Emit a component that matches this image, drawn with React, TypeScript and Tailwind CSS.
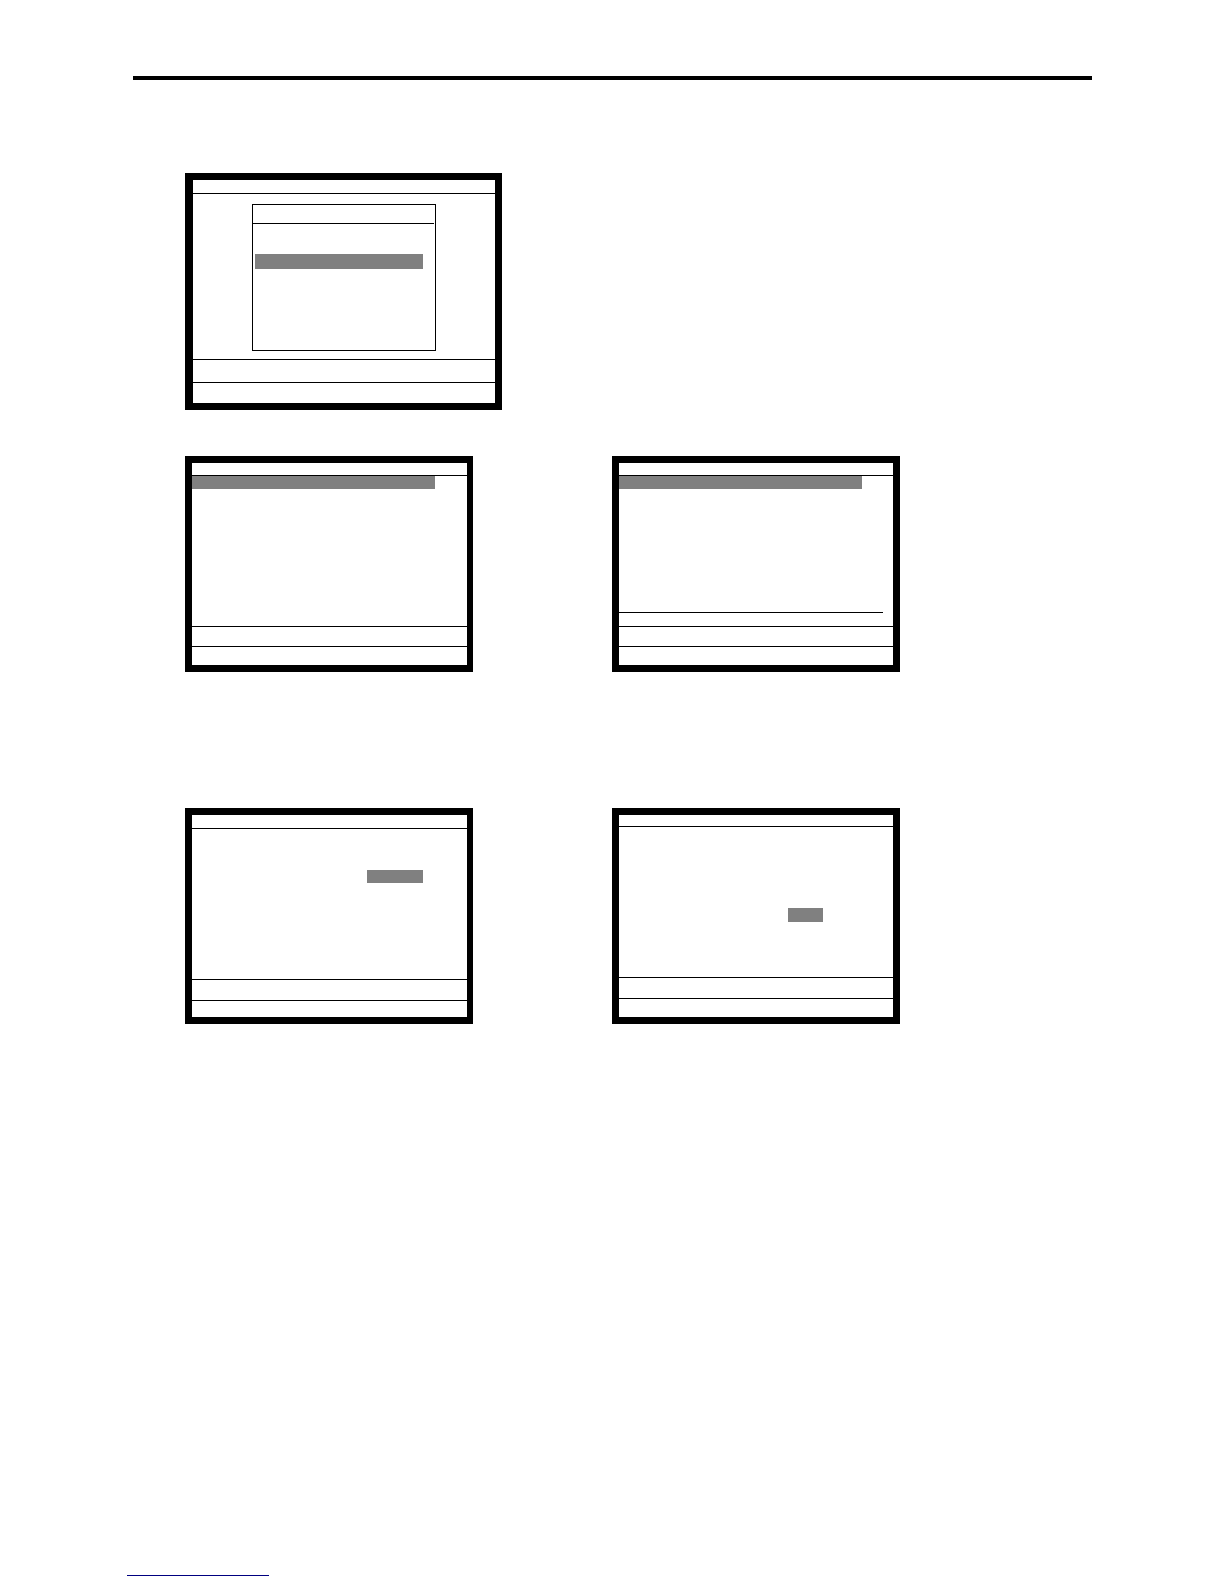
import type { ReactNode } from "react";
import clsx from "clsx";

type ScreenProps = {
  label: string;
  frame: string;
  title: string;
  message: string;
  status: string;
  children: ReactNode;
};

/* A terminal display: title strip, work area, message strip and status strip. */
function Screen({ label, frame, title, message, status, children }: ScreenProps) {
  return (
    <section
      aria-label={label}
      className={clsx("w-full divide-y divide-black border-[7px] border-black bg-white", frame)}
    >
      <header className={title} />
      <div>{children}</div>
      <div className={message} />
      <footer className={status} />
    </section>
  );
}

export default function App() {
  return (
    <div className="flex min-h-screen flex-col bg-white font-['Liberation_Sans',sans-serif]">
      <header className="pt-19 pr-[132px] pl-[133px]">
        <hr className="border-t-4 border-black" />
      </header>

      <main className="pt-[93px] pr-[185px] pl-[185px]">
        <Screen
          label="Menu window"
          frame="max-w-[317px] border-l-8"
          title="h-3.5"
          message="h-[23px]"
          status="h-5"
        >
          <div className="flex h-[165px] justify-center pt-2.5 pb-2">
            <div className="w-[184px] border border-black">
              <div className="mr-px h-[19px] border-b border-black" />
              <div className="mt-[30px] mr-3 ml-0.5 h-[15px] bg-[#808080]" />
            </div>
          </div>
        </Screen>

        <div className="grid grid-cols-2 pt-[46px]">
          <Screen
            label="List"
            frame="max-w-[288px] border-r-6"
            title="h-[13px]"
            message="h-5"
            status="h-[18px]"
          >
            <div className="h-[150px] pr-8">
              <div className="h-[13px] bg-[#808080]" />
            </div>
          </Screen>
          <Screen
            label="List with total line"
            frame="max-w-[288px]"
            title="h-[13px]"
            message="h-5"
            status="h-[18px]"
          >
            <div className="flex h-[150px] flex-col justify-between pb-[13px]">
              <div className="mr-[31px] h-[13px] bg-[#808080]" />
              <div className="mr-2.5 h-px bg-black" />
            </div>
          </Screen>
        </div>

        <div className="grid grid-cols-2 pt-[136px]">
          <Screen
            label="Wide entry field"
            frame="max-w-[288px] border-r-6"
            title="h-3.5"
            message="h-[21px]"
            status="h-4"
          >
            <div className="flex h-[150px] justify-end pt-[41px] pr-11">
              <div className="h-[13px] w-14 bg-[#808080]" />
            </div>
          </Screen>
          <Screen
            label="Narrow entry field"
            frame="max-w-[288px]"
            title="h-3"
            message="h-[21px]"
            status="h-[18px]"
          >
            <div className="flex h-[150px] justify-end pt-[81px] pr-[70px]">
              <div className="h-3.5 w-[35px] bg-[#808080]" />
            </div>
          </Screen>
        </div>
      </main>

      <footer className="mt-auto pb-2 pl-[127px]">
        <hr className="w-[142px] border-t border-[#000080]" />
      </footer>
    </div>
  );
}
